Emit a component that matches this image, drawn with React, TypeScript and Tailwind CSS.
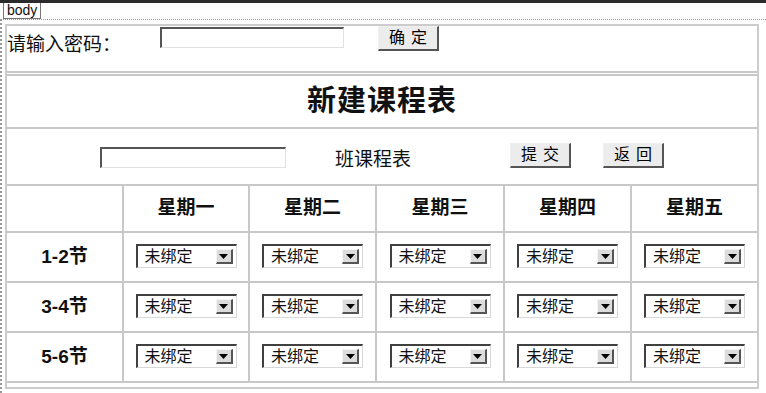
import React from "react";

const days = ["星期一", "星期二", "星期三", "星期四", "星期五"];
const periods = ["1-2节", "3-4节", "5-6节"];

function OldSelect() {
  return (
    <div className="flex h-[24px] w-[101px] items-stretch border-t-2 border-l-2 border-t-[#404040] border-l-[#404040] border-r border-b border-r-[#d8d8d8] border-b-[#d8d8d8] bg-white">
      <span className="flex-1 pl-[7px] text-[16px] leading-[21px] text-[#111]">未绑定</span>
      <span className="my-[3px] mr-[3px] flex w-[17px] items-center justify-center border border-t-[#f4f4f4] border-l-[#f4f4f4] border-r-2 border-b-2 border-r-[#555] border-b-[#555] bg-[#dcdcdc]">
        <svg width="9" height="5" viewBox="0 0 9 5">
          <path d="M0 0h9L4.5 5z" fill="#000" />
        </svg>
      </span>
    </div>
  );
}

function OldButton({ label }: { label: string }) {
  return (
    <button className="h-[25px] w-[61px] border border-t-[#f0f0f0] border-l-[#f0f0f0] border-r-2 border-b-2 border-r-[#555] border-b-[#555] bg-[#ececec] pl-[6px] text-[16px] leading-none tracking-[6px] text-[#000]">
      {label}
    </button>
  );
}

function OldInput({ w }: { w: string }) {
  return (
    <div
      className={`h-[21px] ${w} border-t-2 border-l-2 border-t-[#555] border-l-[#555] border-r border-b border-r-[#e2e2e2] border-b-[#e2e2e2] bg-white`}
    />
  );
}

export default function App() {
  return (
    <div
      className="relative h-[393px] w-[766px] overflow-hidden bg-white text-[#111]"
      style={{ fontFamily: '"Liberation Sans", "Noto Sans CJK SC", sans-serif' }}
    >
      <div className="h-[3px] bg-[#2b2b2b]" />
      <div className="flex h-[16px] pl-[3px]">
        <span className="border-x border-b border-[#777] px-[3px] text-[14px] leading-[15px]">
          body
        </span>
      </div>
      <div className="h-[374px] border-t border-l-2 border-dotted border-[#999] pt-[4px] pl-[3px]">
        <div className="w-[754px] border-2 border-[#cccccc]">
          <div className="flex h-[47px] items-start border-b-2 border-[#c8c8c8]">
            <span className="mt-[7px] w-[153px] text-[19px] leading-[24px]">请输入密码：</span>
            <div className="mt-[1px]">
              <OldInput w="w-[184px]" />
            </div>
            <div className="ml-[34px]">
              <OldButton label="确定" />
            </div>
          </div>
          <div className="mt-[1px] border-t-2 border-[#c8c8c8]">
            <div className="flex h-[53px] items-center justify-center border-b-2 border-[#c8c8c8] text-[29px] font-semibold tracking-[1px]">
              新建课程表
            </div>
            <div className="flex h-[57px] items-center border-b-2 border-[#c8c8c8]">
              <div className="ml-[93px] mt-[2px]">
                <OldInput w="w-[186px]" />
              </div>
              <span className="ml-[49px] mt-[8px] text-[19px]">班课程表</span>
              <div className="ml-[99px] -mt-[3px]">
                <OldButton label="提交" />
              </div>
              <div className="ml-[32px] -mt-[3px]">
                <OldButton label="返回" />
              </div>
            </div>
            <div className="grid grid-cols-[117px_126px_127px_128px_127px_1fr]">
              <div className="h-[47px] border-r-2 border-b-2 border-[#c8c8c8]" />
              {days.map((d, i) => (
                <div
                  key={d}
                  className={`flex h-[47px] items-center justify-center border-b-2 border-[#c8c8c8] text-[19px] font-bold ${
                    i < 4 ? "border-r-2" : ""
                  }`}
                >
                  {d}
                </div>
              ))}
              {periods.map((p) => (
                <React.Fragment key={p}>
                  <div className="flex h-[50px] items-center justify-center border-r-2 border-b-2 border-[#c8c8c8] text-[19px] font-bold">
                    {p}
                  </div>
                  {days.map((d, i) => (
                    <div
                      key={d}
                      className={`flex h-[50px] items-center justify-center border-b-2 border-[#c8c8c8] pb-[2px] ${
                        i < 4 ? "border-r-2" : ""
                      }`}
                    >
                      <OldSelect />
                    </div>
                  ))}
                </React.Fragment>
              ))}
            </div>
          </div>
          <div className="h-[4px]" />
        </div>
      </div>
    </div>
  );
}
